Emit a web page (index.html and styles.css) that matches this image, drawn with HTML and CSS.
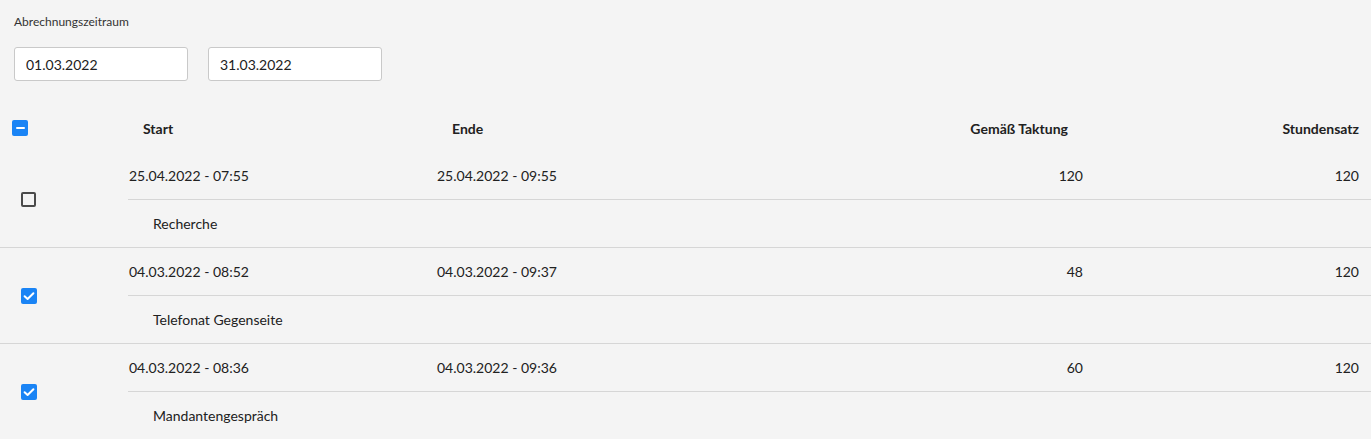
FILE: index.html
```html
<!DOCTYPE html>
<html lang="de">
<head>
<meta charset="utf-8">
<title>Abrechnung</title>
<link rel="stylesheet" href="styles.css">
</head>
<body>
<div class="page">
  <div class="period">
    <div class="period-label">Abrechnungszeitraum</div>
    <div class="period-inputs">
      <input class="date-input" type="text" value="01.03.2022">
      <input class="date-input" type="text" value="31.03.2022">
    </div>
  </div>

  <div class="table">
    <div class="head-row">
      <div class="check-cell head-check">
        <span class="cb cb-indeterminate"><span class="cb-dash"></span></span>
      </div>
      <div class="cols head-cols">
        <div class="hc">Start</div>
        <div class="hc">Ende</div>
        <div class="hc num">Gemäß Taktung</div>
        <div class="hc num last">Stundensatz</div>
      </div>
    </div>

    <div class="row">
      <div class="check-cell">
        <span class="cb cb-empty"></span>
      </div>
      <div class="detail">
        <div class="cols main-line">
          <div class="dc">25.04.2022 - 07:55</div>
          <div class="dc">25.04.2022 - 09:55</div>
          <div class="dc num">120</div>
          <div class="dc num">120</div>
        </div>
        <div class="sub-line">Recherche</div>
      </div>
    </div>

    <div class="row">
      <div class="check-cell">
        <span class="cb cb-checked"><svg viewBox="0 0 16 16" width="16" height="16"><path d="M3.6 8.2 L6.6 11 L12.4 5.2" fill="none" stroke="#fff" stroke-width="2" stroke-linecap="round" stroke-linejoin="round"/></svg></span>
      </div>
      <div class="detail">
        <div class="cols main-line">
          <div class="dc">04.03.2022 - 08:52</div>
          <div class="dc">04.03.2022 - 09:37</div>
          <div class="dc num">48</div>
          <div class="dc num">120</div>
        </div>
        <div class="sub-line">Telefonat Gegenseite</div>
      </div>
    </div>

    <div class="row">
      <div class="check-cell">
        <span class="cb cb-checked"><svg viewBox="0 0 16 16" width="16" height="16"><path d="M3.6 8.2 L6.6 11 L12.4 5.2" fill="none" stroke="#fff" stroke-width="2" stroke-linecap="round" stroke-linejoin="round"/></svg></span>
      </div>
      <div class="detail">
        <div class="cols main-line">
          <div class="dc">04.03.2022 - 08:36</div>
          <div class="dc">04.03.2022 - 09:36</div>
          <div class="dc num">60</div>
          <div class="dc num">120</div>
        </div>
        <div class="sub-line">Mandantengespräch</div>
      </div>
    </div>
  </div>
</div>
</body>
</html>
```

FILE: styles.css
```css
* { box-sizing: border-box; }

html, body {
  margin: 0;
  padding: 0;
  background: #f4f4f4;
}

body {
  font-family: Lato, "Noto Sans", sans-serif;
  font-size: 14px;
  color: #212121;
}

.page {
  display: flex;
  flex-direction: column;
}

.period {
  padding: 14px 0 0 14px;
}

.period-label {
  font-size: 12px;
  line-height: 16px;
  color: #333;
}

.period-inputs {
  display: flex;
  gap: 20px;
  margin-top: 17px;
}

.date-input {
  width: 174px;
  height: 34px;
  padding: 0 11px;
  border: 1px solid #c9c9c9;
  border-radius: 3px;
  background: #fff;
  font-family: Lato, "Noto Sans", sans-serif;
  font-size: 14px;
  color: #212121;
  outline: none;
}

.table {
  margin-top: 23px;
  display: flex;
  flex-direction: column;
}

.head-row {
  display: flex;
  height: 48px;
  align-items: center;
}

.check-cell {
  width: 128px;
  flex: none;
  display: flex;
  align-items: center;
  padding-left: 21px;
}

.head-check {
  padding-left: 12px;
}

.cols {
  display: grid;
  grid-template-columns: 309px 1fr 200px 276px;
  padding-right: 12px;
  align-items: center;
}

.head-cols {
  flex: 1;
}

.hc {
  font-weight: 700;
  padding: 0 15px;
}

.hc.last {
  padding: 0;
}

.dc:first-child {
  padding-left: 1px;
}

.num {
  text-align: right;
}

.row {
  display: flex;
  border-bottom: 1px solid #d6d6d6;
}

.detail {
  flex: 1;
  display: flex;
  flex-direction: column;
}

.main-line {
  flex: none;
  height: 48px;
  border-bottom: 1px solid #d6d6d6;
}

.sub-line {
  flex: none;
  height: 47px;
  display: flex;
  align-items: center;
  padding-left: 25px;
}

.cb {
  width: 16px;
  height: 16px;
  border-radius: 2px;
  display: flex;
  align-items: center;
  justify-content: center;
  flex: none;
}

.cb-indeterminate,
.cb-checked {
  background: #1a84f5;
}

.cb-dash {
  width: 9px;
  height: 2px;
  background: #fff;
  border-radius: 1px;
}

.cb-empty {
  width: 15px;
  height: 15px;
  border: 2px solid #4a4a4a;
  background: transparent;
}

.cb-checked svg {
  display: block;
}
```
